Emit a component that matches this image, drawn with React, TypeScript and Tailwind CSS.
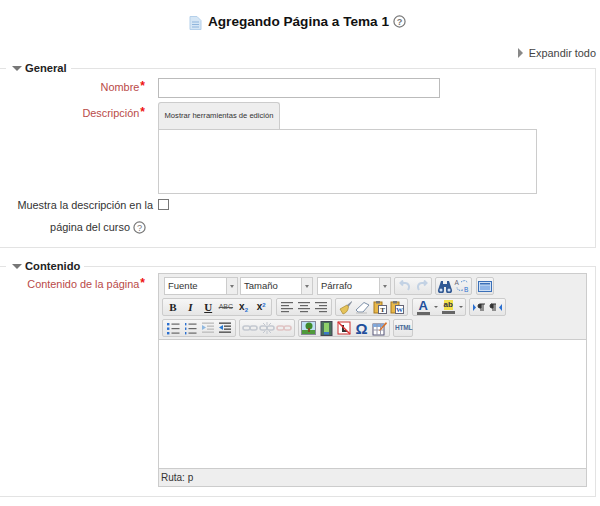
import React from "react";

const Help = ({ size = 13 }: { size?: number }) => (
  <svg width={size} height={size} viewBox="0 0 14 14" className="shrink-0">
    <circle cx="7" cy="7" r="6" fill="#fff" stroke="#777" strokeWidth="1.3" />
    <text x="7" y="10.5" textAnchor="middle" fontSize="10" fontFamily="Liberation Sans" fill="#777">?</text>
  </svg>
);

const Down = () => <span className="h-0 w-0 border-x-[5px] border-t-[5px] border-x-transparent border-t-[#777]" />;

const Legend = ({ children }: { children: React.ReactNode }) => (
  <legend className="ml-[6px] flex items-center gap-[2px] pl-[6px] pr-[4px] text-[11.2px] leading-[14px] font-bold text-[#222]">
    <Down />
    <span className="ml-[1px]">{children}</span>
  </legend>
);

const Btn = ({ w = 18, children }: { w?: number; children: React.ReactNode }) => (
  <span className="flex h-[16px] items-center justify-center" style={{ width: w }}>{children}</span>
);

const Group = ({ children, w }: { children: React.ReactNode; w: number }) => (
  <span className="flex h-[18px] shrink-0 items-center justify-around rounded-[2px] border border-[#ccc] bg-gradient-to-b from-[#f6f6f6] to-[#e6e6e6] px-[1px]" style={{ width: w }}>
    {children}
  </span>
);

const Select = ({ label, w }: { label: string; w: number }) => (
  <span className="flex h-[18px] shrink-0 border border-[#ccc] bg-white text-[9.5px] leading-[16px] text-[#333]" style={{ width: w }}>
    <span className="flex-1 pl-[3px]">{label}</span>
    <span className="flex w-[11px] items-center justify-center border-l border-[#ccc] bg-[#eee]">
      <span className="h-0 w-0 border-x-[2px] border-t-[3px] border-x-transparent border-t-[#777]" />
    </span>
  </span>
);

const Lines = ({ kind }: { kind: "l" | "c" | "r" }) => {
  const rows: [number, number][] =
    kind === "l" ? [[1, 12], [1, 8], [1, 12], [1, 8]] : kind === "c" ? [[1, 12], [3, 8], [1, 12], [3, 8]] : [[1, 12], [5, 8], [1, 12], [5, 8]];
  return (
    <svg width="14" height="12" viewBox="0 0 14 12">
      {rows.map(([x, w], i) => (
        <rect key={i} x={x} y={1 + i * 3} width={w} height="1.2" fill="#666" />
      ))}
    </svg>
  );
};

const ListIcon = ({ ord }: { ord?: boolean }) => (
  <svg width="14" height="13" viewBox="0 0 14 13">
    {[1, 5.5, 10].map((y) => (
      <React.Fragment key={y}>
        <rect x={ord ? 2 : 1} y={y} width={ord ? 1.4 : 2.4} height="2.4" fill="#2a6fd0" />
        <rect x="5.5" y={y + 0.5} width="8" height="1.2" fill="#666" />
      </React.Fragment>
    ))}
  </svg>
);

const Indent = ({ out }: { out?: boolean }) => (
  <svg width="14" height="12" viewBox="0 0 14 12">
    {[0.5, 3.5, 6.5, 9.5].map((y, i) => (
      <rect key={y} x={i === 1 || i === 2 ? 6 : 1} y={y} width={i === 1 || i === 2 ? 7 : 12} height="1.3" fill={out ? "#444" : "#bbb"} />
    ))}
    <path d={out ? "M5 3v5L1 5.5z" : "M1 3v5l4-2.5z"} fill={out ? "#2a7ad0" : "#8fb8e0"} />
  </svg>
);

const Chain = ({ c = "#c3c8d0", broken }: { c?: string; broken?: boolean }) => (
  <svg width="16" height="12" viewBox="0 0 16 12">
    <rect x="1" y="4" width="7" height="4" rx="2" fill="none" stroke={c} strokeWidth="1.6" />
    <rect x="8" y="4" width="7" height="4" rx="2" fill="none" stroke={c} strokeWidth="1.6" />
    {broken && <path d="M8 0v3M8 9v3M4 1l2 2M12 1l-2 2M4 11l2-2M12 11l-2-2" stroke={c} />}
  </svg>
);

const Paste = ({ letter }: { letter: string }) => (
  <svg width="14" height="14" viewBox="0 0 14 14">
    <rect x="1" y="2" width="8" height="11" fill="#e8b84a" stroke="#a87a20" />
    <rect x="3" y="1" width="4" height="2.5" fill="#777" />
    <rect x="5.5" y="5.5" width="8" height="8" fill="#fff" stroke="#667" />
    <text x="9.5" y="12.3" textAnchor="middle" fontSize="7" fontWeight="700" fontFamily="Liberation Serif" fill={letter === "W" ? "#2456b0" : "#333"}>{letter}</text>
  </svg>
);

const Arrow = ({ flip }: { flip?: boolean }) => (
  <svg width="14" height="12" viewBox="0 0 14 12" style={flip ? { transform: "scaleX(-1)" } : undefined}>
    <path d="M10 10c2-3 1-7-3-7H3M5 0.5 2.5 3 5 5.5" fill="none" stroke="#c3d2e4" strokeWidth="2" />
  </svg>
);

const Sm = ({ w = 6 }: { w?: number }) => (
  <span className="flex h-[16px] items-center justify-center" style={{ width: w }}>
    <span className="h-0 w-0 border-x-[2px] border-t-[2px] border-x-transparent border-t-[#666]" />
  </span>
);

const Label = ({ children }: { children: React.ReactNode }) => (
  <span className="pr-[8px] whitespace-nowrap text-[#b94a48]">
    {children}
    <span className="relative top-[-1px] ml-[1px] text-[12px] font-bold text-[#e11]">*</span>
  </span>
);

export default function App() {
  return (
    <div className="h-[506px] w-[600px] overflow-hidden bg-white text-[10.9px] leading-[18px] text-[#333]" style={{ fontFamily: '"Liberation Sans", Arial, sans-serif' }}>
      <h2 className="flex h-[42px] items-center justify-center pt-[1px] pr-[5px] text-[13.6px] font-bold text-[#111]">
        <svg width="13" height="14" viewBox="0 0 13 14" className="mr-[6px] mt-[2px]">
          <path d="M1 0.5h7l4 4v9H1z" fill="#d5e6f5" stroke="#b5d0ea" />
          <path d="M3 6h7M3 8.5h7M3 11h7" stroke="#8fb5dc" />
        </svg>
        <span>Agregando Página a Tema 1</span>
        <span className="ml-[4px]"><Help size={13} /></span>
      </h2>

      <div className="mr-[4px] flex h-[19px] items-center justify-end pt-[3px] text-[#444]">
        <span className="mr-[6px] h-0 w-0 border-y-[5px] border-l-[5px] border-y-transparent border-l-[#888]" />
        Expandir todo
      </div>

      <fieldset className="mr-[4px] ml-[-1px] h-[187px] border border-[#e3e3e3]">
        <Legend>General</Legend>
        <div className="grid grid-cols-[153px_1fr] gap-x-[5px] pt-[3px]">
          <div className="flex h-[24px] items-start justify-end"><Label>Nombre</Label></div>
          <div className="h-[24px]">
            <div className="h-[20px] w-[282px] border border-[#bbb] bg-white" />
          </div>
          <div className="flex items-start justify-end pt-[2px]"><Label>Descripción</Label></div>
          <div>
            <div className="flex h-[27px] w-[122px] items-center justify-center rounded-t-[3px] border border-b-0 border-[#ccc] bg-[#eee] text-[7.6px] whitespace-nowrap text-[#333]">
              Mostrar herramientas de edición
            </div>
            <div className="h-[65px] w-[379px] border border-[#ccc] bg-white" />
          </div>
          <div className="text-right leading-[22px] whitespace-nowrap">
            <div>Muestra la descripción en la</div>
            <div className="flex items-center justify-end gap-[3px] pr-[7px]">página del curso <Help size={13} /></div>
          </div>
          <div className="pt-[5px]">
            <div className="h-[11px] w-[11px] border border-[#777] bg-white" />
          </div>
        </div>
      </fieldset>

      <fieldset className="mt-[11px] mr-[4px] ml-[-1px] h-[238px] border border-[#e3e3e3]">
        <Legend>Contenido</Legend>
        <div className="grid grid-cols-[153px_1fr] gap-x-[5px]">
          <div className="flex items-start justify-end pt-[2px]"><Label>Contenido de la página</Label></div>
          <div className="h-[214px] w-[429px] border border-[#ccc] bg-white">
            <div className="flex h-[66px] flex-col gap-[3px] border-b border-[#ccc] bg-[#eee] pt-[3px] pl-[5px]">
              <div className="flex items-center">
                <Select label="Fuente" w={74} />
                <span className="ml-[2px]"><Select label="Tamaño" w={73} /></span>
                <span className="ml-[4px]"><Select label="Párrafo" w={74} /></span>
                <span className="ml-[3px]">
                  <Group w={38}><Btn><Arrow /></Btn><Btn><Arrow flip /></Btn></Group>
                </span>
                <span className="ml-[3px]">
                  <Group w={37}>
                    <Btn>
                      <svg width="16" height="13" viewBox="0 0 16 13">
                        <path d="M4 1h2v3h4V1h2l3 9a2.500 2.500 0 0 1-6 1V7H7v4a2.500 2.500 0 0 1-6-1z" fill="#335a94" />
                        <circle cx="4" cy="10" r="1.500" fill="#cfe0f5" /><circle cx="12" cy="10" r="1.500" fill="#cfe0f5" />
                      </svg>
                    </Btn>
                    <Btn>
                      <svg width="16" height="14" viewBox="0 0 16 14">
                        <text x="0.5" y="6" fontSize="6.5" fontFamily="Liberation Sans" fill="#667">A</text>
                        <text x="10" y="13" fontSize="6.5" fontFamily="Liberation Sans" fill="#2a6fd0">B</text>
                        <path d="M7 3c3-2 6-2 6 1M9 11C5 12 3 11 3 8" fill="none" stroke="#5a8fd0" strokeDasharray="1.5 1" />
                      </svg>
                    </Btn>
                  </Group>
                </span>
                <span className="ml-[4px]">
                  <Group w={18}>
                    <svg width="14" height="11" viewBox="0 0 14 11">
                      <rect x="0.5" y="0.5" width="13" height="10" fill="#cfe0f5" stroke="#3a6fb8" />
                      <rect x="2" y="2" width="10" height="1.5" fill="#3a6fb8" />
                      <rect x="2" y="4.5" width="10" height="4.5" fill="#8fb5e8" />
                    </svg>
                  </Group>
                </span>
              </div>

              <div className="flex items-center">
                <span className="ml-[-2px]">
                  <Group w={110}>
                    <Btn><span className="text-[11px] font-bold text-[#222]" style={{ fontFamily: '"Liberation Serif", serif' }}>B</span></Btn>
                    <Btn><span className="text-[11px] font-bold italic text-[#222]" style={{ fontFamily: '"Liberation Serif", serif' }}>I</span></Btn>
                    <Btn><span className="text-[11px] font-bold text-[#222] underline" style={{ fontFamily: '"Liberation Serif", serif' }}>U</span></Btn>
                    <Btn><span className="text-[7px] text-[#555] line-through">ABC</span></Btn>
                    <Btn><span className="text-[10px] font-bold text-[#222]">x<sub className="text-[6px] text-[#2a6fd0]">2</sub></span></Btn>
                    <Btn><span className="text-[10px] font-bold text-[#222]">x<sup className="text-[6px] text-[#2a6fd0]">2</sup></span></Btn>
                  </Group>
                </span>
                <span className="ml-[4px]">
                  <Group w={56}><Btn><Lines kind="l" /></Btn><Btn><Lines kind="c" /></Btn><Btn><Lines kind="r" /></Btn></Group>
                </span>
                <span className="ml-[3px]">
                  <Group w={73}>
                    <Btn>
                      <svg width="15" height="15" viewBox="0 0 15 15">
                        <path d="M14 1 9 5l1.500 2L14 2z" fill="#8a93a0" />
                        <path d="M9 5 2 9l3 5c3-1 5-3 5.500-7z" fill="#e5c35a" stroke="#a98a30" strokeWidth="0.7" />
                      </svg>
                    </Btn>
                    <Btn>
                      <svg width="15" height="13" viewBox="0 0 15 13">
                        <path d="M9 1.500 14 4 8 11H3L1 9z" fill="#fff" stroke="#7c8fa8" />
                        <path d="M1 12h11" stroke="#bbb" />
                      </svg>
                    </Btn>
                    <Btn><Paste letter="T" /></Btn>
                    <Btn><Paste letter="W" /></Btn>
                  </Group>
                </span>
                <span className="ml-[4px]">
                  <Group w={54}>
                    <span className="flex h-[16px] w-[18px] flex-col items-center justify-center">
                      <span className="text-[13px] leading-[12px] font-bold text-[#1f4f9c]">A</span>
                      <span className="h-[3px] w-[13px] bg-[#666]" />
                    </span>
                    <Sm />
                    <span className="flex h-[16px] w-[18px] flex-col items-center justify-center">
                      <span className="bg-[#f2e14a] text-[8px] leading-[10px] font-bold text-[#334]">ab</span>
                      <span className="mt-[1px] h-[3px] w-[13px] bg-[#666]" />
                    </span>
                    <Sm />
                  </Group>
                </span>
                <span className="ml-[3px]">
                  <Group w={37}>
                    <Btn>
                      <svg width="14" height="9" viewBox="0 0 14 9">
                        <path d="M1 1v7l3-3.500z" fill="#2a6fd0" />
                        <path d="M8 1h5M8 1a2 2 0 0 0 0 4h1V1M9 1v7M11 1v7" fill="#333" stroke="#333" />
                      </svg>
                    </Btn>
                    <Btn>
                      <svg width="14" height="9" viewBox="0 0 14 9">
                        <path d="M13 1v7l-3-3.500z" fill="#2a6fd0" />
                        <path d="M2 1h5M3 1a2 2 0 0 0 0 4h1V1M4 1v7M6 1v7" fill="#333" stroke="#333" />
                      </svg>
                    </Btn>
                  </Group>
                </span>
              </div>

              <div className="flex items-center">
                <span className="ml-[-2px]">
                  <Group w={74}>
                    <Btn><ListIcon /></Btn>
                    <Btn><ListIcon ord /></Btn>
                    <Btn><Indent /></Btn>
                    <Btn><Indent out /></Btn>
                  </Group>
                </span>
                <span className="ml-[3px]">
                  <Group w={56}>
                    <Btn><Chain /></Btn>
                    <Btn><Chain broken /></Btn>
                    <Btn><Chain c="#e0c4c4" /></Btn>
                  </Group>
                </span>
                <span className="ml-[3px]">
                  <Group w={92}>
                    <Btn>
                      <svg width="15" height="14" viewBox="0 0 15 14">
                        <rect x="0.5" y="0.5" width="14" height="13" fill="#bfe0f5" stroke="#889" />
                        <rect x="1" y="9" width="13" height="4" fill="#4f9a3c" />
                        <circle cx="8" cy="5" r="3.500" fill="#3f8a2c" />
                        <rect x="7" y="7" width="2" height="4" fill="#7a5020" />
                      </svg>
                    </Btn>
                    <Btn>
                      <svg width="13" height="15" viewBox="0 0 13 15">
                        <rect x="1" y="0.5" width="11" height="14" fill="#47705a" stroke="#445" />
                        <rect x="4" y="2" width="5" height="9" fill="#8fd06a" />
                        <rect x="4" y="11" width="5" height="2.5" fill="#3a78c8" />
                      </svg>
                    </Btn>
                    <Btn>
                      <svg width="14" height="14" viewBox="0 0 14 14">
                        <rect x="1" y="1" width="12" height="12" fill="#fff" stroke="#c33" />
                        <path d="M6 4v6h4" stroke="#333" strokeWidth="2" fill="none" />
                        <path d="M1 1l12 12" stroke="#d33" strokeWidth="1.4" />
                      </svg>
                    </Btn>
                    <Btn><span className="text-[15px] leading-none font-bold text-[#1f4f9c]">Ω</span></Btn>
                    <Btn>
                      <svg width="15" height="15" viewBox="0 0 15 15">
                        <rect x="1" y="3" width="11" height="11" fill="#fff" stroke="#557" />
                        <rect x="1" y="3" width="11" height="3" fill="#7fa8dc" />
                        <path d="M5 3v11M8.500 3v11M1 9h11" stroke="#99a" />
                        <path d="M14 1 8 8l-1 2 2-1 6-6.500z" fill="#d9722a" />
                      </svg>
                    </Btn>
                  </Group>
                </span>
                <span className="ml-[3px]">
                  <Group w={20}><span className="text-[6.5px] font-bold tracking-[-0.2px] text-[#4a6a98]">HTML</span></Group>
                </span>
              </div>
            </div>
            <div className="h-[128px] bg-white" />
            <div className="h-[18px] border-t border-[#ccc] bg-[#eee] pl-[2px] text-[10px] leading-[18px] text-[#333]">Ruta: p</div>
          </div>
        </div>
      </fieldset>
    </div>
  );
}
